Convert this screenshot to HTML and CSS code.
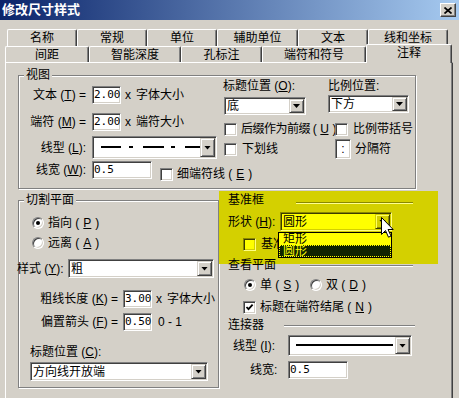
FILE: index.html
```html
<!DOCTYPE html>
<html lang="zh-CN">
  <head>
    <meta charset="UTF-8" />
    <meta name="viewport" content="width=device-width, initial-scale=1.0" />
    <title>修改尺寸样式</title>
    <link rel="stylesheet" href="styles.css">
  </head>
  <body>
    <div class="titlebar">
      <span class="title">修改尺寸样式</span>
      <span class="close-btn">
        <svg width="8" height="7" viewBox="0 0 8 7"><path d="M0.5 0.5 L7.5 6.5 M7.5 0.5 L0.5 6.5" stroke="#000" stroke-width="1.7" /></svg>
      </span>
    </div>

    <!-- Tabs -->
    <div class="tabs">
      <div class="tab-row back">
        <div class="tab w70">名称</div>
        <div class="tab w70">常规</div>
        <div class="tab w70">单位</div>
        <div class="tab w81">辅助单位</div>
        <div class="tab w70">文本</div>
        <div class="tab w80">线和坐标</div>
      </div>
      <div class="tab-row front">
        <div class="tab w84">间距</div>
        <div class="tab w92">智能深度</div>
        <div class="tab w81">孔标注</div>
        <div class="tab w104">端符和符号</div>
        <div class="tab w86 active">注释</div>
      </div>
    </div>

    <div class="panel">
      <!-- 视图 -->
      <div class="group view">
        <div class="group-title">视图</div>
        <div class="view-top">
          <div class="view-left">
            <div class="field-row">
              <span class="lbl">文本 (<u>T</u>) =</span>
              <span class="edit num">2.00</span>
              <span class="times">x</span>
              <span>字体大小</span>
            </div>
            <div class="field-row second">
              <span class="lbl">端符 (<u>M</u>) =</span>
              <span class="edit num">2.00</span>
              <span class="times">x</span>
              <span>端符大小</span>
            </div>
            <div class="field-row third">
              <span class="lbl">线型 (<u>L</u>):</span>
              <div class="combo linetype">
                <div class="combo-text">
                  <svg width="106" height="19" viewBox="0 0 106 19">
                    <rect x="7" y="8" width="20" height="2" />
                    <rect x="35" y="8" width="4" height="2" />
                    <rect x="49" y="8" width="21" height="2" />
                    <rect x="77" y="8" width="4" height="2" />
                    <rect x="91" y="8" width="15" height="2" />
                  </svg>
                </div>
                <div class="combo-btn"><i class="arrow"></i></div>
              </div>
            </div>
          </div>

          <div class="view-right">
            <div class="pos-row">
              <div class="pos-col first">
                <div>标题位置 (<u>O</u>):</div>
                <div class="combo pos-title">
                  <span class="combo-text">底</span>
                  <span class="combo-btn"><i class="arrow"></i></span>
                </div>
              </div>
              <div class="pos-col">
                <div>比例位置:</div>
                <div class="combo pos-scale">
                  <span class="combo-text">下方</span>
                  <span class="combo-btn"><i class="arrow"></i></span>
                </div>
              </div>
            </div>
            <div class="check-row r1">
              <div class="check-item first tight"><span class="checkbox"></span>后缀作为前缀 (<u>U</u>)</div>
              <div class="check-item"><span class="checkbox"></span>比例带括号</div>
            </div>
            <div class="check-row r2">
              <div class="check-item first"><span class="checkbox"></span>下划线</div>
              <div class="check-item sep"><span class="sep-box">:</span>分隔符</div>
            </div>
          </div>
        </div>

        <div class="view-bottom">
          <span class="lbl">线宽 (<u>W</u>):</span>
          <span class="edit num wide">0.5</span>
          <div class="check-item thin"><span class="checkbox"></span>细端符线 (<u>E</u>)</div>
        </div>
      </div>

      <div class="lower">
        <!-- 切割平面 -->
        <div class="group cut">
          <div class="group-title">切割平面</div>
          <div class="radio-row first"><span class="radio on"></span>指向 (<u>P</u>)</div>
          <div class="radio-row"><span class="radio"></span>远离 (<u>A</u>)</div>
          <div class="style-row">
            <span class="style-lbl">样式 (<u>Y</u>):</span>
            <div class="combo style">
              <span class="combo-text">粗</span>
              <span class="combo-btn"><i class="arrow"></i></span>
            </div>
          </div>
          <div class="field-row bar-len">
            <span class="lbl long">粗线长度 (<u>K</u>) =</span>
            <span class="edit num">3.00</span>
            <span class="times">x</span>
            <span>字体大小</span>
          </div>
          <div class="field-row offset">
            <span class="lbl long">偏置箭头 (<u>F</u>) =</span>
            <span class="edit num">0.50</span>
            <span class="range">0 - 1</span>
          </div>
          <div class="cut-title-lbl">标题位置 (<u>C</u>):</div>
          <div class="combo cut-title">
            <span class="combo-text">方向线开放端</span>
            <span class="combo-btn"><i class="arrow"></i></span>
          </div>
        </div>

        <div class="lower-right">
          <!-- 基准框 (highlighted) -->
          <div class="highlight">
            <div class="sec-row">
              <span>基准框</span>
              <span class="etch datum-line"></span>
            </div>
            <div class="shape-row">
              <span class="shape-lbl">形状 (<u>H</u>):</span>
              <div class="combo yellow shape">
                <span class="combo-text">圆形</span>
                <span class="combo-btn"><i class="arrow"></i></span>
              </div>
            </div>
            <div class="datum-check"><span class="checkbox yellow"></span>基准</div>
          </div>

          <div class="sec-row view-plane">
            <span>查看平面</span>
            <span class="etch plane-line"></span>
          </div>
          <div class="plane-radios">
            <div class="radio-item first"><span class="radio on"></span>单 (<u>S</u>)</div>
            <div class="radio-item"><span class="radio"></span>双 (<u>D</u>)</div>
          </div>
          <div class="end-check">
            <span class="checkbox">
              <svg width="9" height="9" viewBox="0 0 9 9"><path d="M1.5 4 L3.5 6.2 L7.6 1.6" fill="none" stroke="#000" stroke-width="1.8" /></svg>
            </span>
            标题在端符结尾 (<u>N</u>)
          </div>
          <div class="sec-row connector">
            <span>连接器</span>
            <span class="etch conn-line"></span>
          </div>
          <div class="conn-type">
            <span class="conn-lbl">线型 (<u>I</u>):</span>
            <div class="combo conn-combo">
              <div class="combo-text">
                <svg width="103" height="17" viewBox="0 0 103 17"><rect x="6" y="7" width="97" height="2" /></svg>
              </div>
              <div class="combo-btn"><i class="arrow"></i></div>
            </div>
          </div>
          <div class="conn-width">
            <span class="conn-w-lbl">线宽:</span>
            <span class="edit num wide">0.5</span>
          </div>

          <!-- Open drop-down list of 形状 -->
          <div class="droplist">
            <div class="drop-item">矩形</div>
            <div class="drop-item selected">圆形</div>
          </div>

          <svg class="cursor" width="13" height="21" viewBox="0 0 13 21">
            <path d="M0.5 0.5 L0.5 17.5 L4.5 13.5 L7.5 20.2 L10 19 L7 12.5 L12.2 12.5 Z" fill="#fff" stroke="#000" stroke-width="1" />
          </svg>
        </div>
      </div>
    </div>
  </body>
</html>
```

FILE: styles.css
```css
* {
  box-sizing: border-box;
}

body {
  margin: 0;
  width: 459px;
  height: 398px;
  overflow: hidden;
  background-color: #d4d0c8;
  font-family: "Liberation Sans", "Noto Sans CJK SC", sans-serif;
  font-size: 12px;
  line-height: 14px;
  color: #000;
}

u {
  text-underline-offset: 1px;
}

/* Title bar */
.titlebar {
  height: 20px;
  display: flex;
  align-items: center;
  justify-content: space-between;
  padding: 0 3px 0 2px;
  background: linear-gradient(to right, #0a246a, #a6caf0);
}

.title {
  color: white;
  font-weight: bold;
  font-size: 13px;
}

.close-btn {
  width: 16px;
  height: 14px;
  display: flex;
  align-items: center;
  justify-content: center;
  background-color: #d4d0c8;
  border: 1px solid;
  border-color: #fff #404040 #404040 #fff;
  box-shadow: inset -1px -1px #808080;
}

/* Tabs */
.tabs {
  margin-top: 9px;
}

.tab-row {
  display: flex;
}

.tab-row.back {
  height: 17px;
  padding-left: 7px;
}

.tab-row.front {
  height: 16px;
  padding-left: 5px;
}

.tab {
  flex: none;
  height: 100%;
  background-color: #d4d0c8;
  border-top: 1px solid #fff;
  border-left: 1px solid #fff;
  border-right: 1px solid #404040;
  border-radius: 2px 2px 0 0;
  box-shadow: inset -1px 0 #808080;
  text-align: center;
  line-height: 14px;
  padding-top: 1px;
}

.tab.active {
  position: relative;
  z-index: 1;
  height: 19px;
  margin-top: -2px;
}

.w70 { width: 70px; }
.w80 { width: 80px; }
.w81 { width: 81px; }
.w84 { width: 84px; }
.w86 { width: 86px; }
.w92 { width: 92px; }
.w104 { width: 104px; }

/* Tab page */
.panel {
  margin-left: 5px;
  width: 448px;
  height: 340px;
  padding-left: 12px;
  border-top: 1px solid #fff;
  border-left: 1px solid #fff;
  border-right: 1px solid #404040;
  box-shadow: inset -1px 0 #808080;
}

.group {
  border: 1px solid #808080;
  box-shadow: inset 1px 1px #fff, 1px 1px #fff;
}

.group-title {
  width: fit-content;
  margin: -8px 0 0 5px;
  padding: 0 2px;
  background-color: #d4d0c8;
}

/* Win classic controls */
.edit {
  flex: none;
  height: 18px;
  width: 29px;
  padding-left: 1px;
  background-color: white;
  border: 1px solid;
  border-color: #808080 #fff #fff #808080;
  box-shadow: inset 1px 1px #404040, inset -1px -1px #d4d0c8;
}

.edit.num {
  font-family: "DejaVu Sans Mono", monospace;
  font-size: 11px;
  line-height: 16px;
}

.edit.wide {
  width: 60px;
}

.combo {
  flex: none;
  display: flex;
  height: 18px;
  padding: 1px;
  background-color: white;
  border: 1px solid;
  border-color: #808080 #fff #fff #808080;
  box-shadow: inset 1px 1px #404040, inset -1px -1px #d4d0c8;
}

.combo-text {
  flex: 1;
  display: flex;
  align-items: center;
  padding-left: 1px;
  white-space: nowrap;
}

.combo-text svg {
  display: block;
}

.combo-btn {
  flex: none;
  width: 15px;
  display: flex;
  align-items: center;
  justify-content: center;
  background-color: #d4d0c8;
  border: 1px solid;
  border-color: #d4d0c8 #404040 #404040 #d4d0c8;
  box-shadow: inset 1px 1px #fff, inset -1px -1px #808080;
}

.arrow {
  width: 7px;
  height: 4px;
  background-color: black;
  clip-path: polygon(0 0, 100% 0, 50% 100%);
}

.checkbox {
  flex: none;
  width: 13px;
  height: 13px;
  display: flex;
  align-items: center;
  justify-content: center;
  background-color: white;
  border: 1px solid;
  border-color: #808080 #fff #fff #808080;
  box-shadow: inset 1px 1px #404040, inset -1px -1px #d4d0c8;
}

.radio {
  flex: none;
  width: 12px;
  height: 12px;
  border-radius: 50%;
  display: flex;
  align-items: center;
  justify-content: center;
  background-color: white;
  border: 1px solid;
  border-color: #808080 #fff #fff #808080;
  box-shadow: inset 1px 1px #404040, inset -1px -1px #d4d0c8;
}

.radio.on::after {
  content: "";
  width: 4px;
  height: 4px;
  border-radius: 50%;
  background-color: black;
}

.etch {
  height: 2px;
  border-top: 1px solid #808080;
  border-bottom: 1px solid #fff;
}

/* 视图 */
.view {
  margin-top: 12px;
  width: 398px;
  height: 114px;
}

.view-top {
  display: flex;
  margin-top: -3px;
}

.view-left {
  width: 204px;
  flex: none;
  padding-top: 7px;
}

.field-row {
  display: flex;
  align-items: center;
  height: 18px;
  white-space: nowrap;
}

.field-row.second {
  margin-top: 9px;
}

.field-row.third {
  margin-top: 5px;
  height: 23px;
}

.lbl {
  flex: none;
  width: 67px;
  margin-right: 6px;
  text-align: right;
}

.times {
  margin: 0 5px 0 4px;
}

.combo.linetype {
  width: 125px;
  height: 23px;
}

.combo.linetype .combo-text {
  padding-left: 0;
}

.view-right {
  flex: 1;
  white-space: nowrap;
}

.pos-row {
  display: flex;
}

.pos-col.first {
  width: 105px;
}

.combo.pos-title {
  width: 82px;
  margin: 4px 0 0 1px;
}

.combo.pos-scale {
  width: 81px;
  margin-top: 2px;
}

.check-row {
  display: flex;
  align-items: center;
}

.check-row.r1 {
  margin-top: 7px;
  height: 14px;
}

.check-row.r2 {
  margin-top: 3px;
  height: 20px;
}

.check-item {
  display: flex;
  align-items: center;
  gap: 5px;
  white-space: nowrap;
}

.check-item.first {
  width: 111px;
  margin-left: 1px;
}

.check-item.tight {
  gap: 4px;
  letter-spacing: -0.5px;
  min-width: 0;
  overflow: visible;
}

.check-item.sep {
  gap: 4px;
}

.sep-box {
  width: 16px;
  height: 20px;
  display: flex;
  align-items: center;
  justify-content: center;
  background-color: white;
  border: 1px solid;
  border-color: #808080 #fff #fff #808080;
  box-shadow: inset 1px 1px #404040, inset -1px -1px #d4d0c8;
}

.view-bottom {
  display: flex;
  align-items: flex-start;
  height: 18px;
  margin-top: 2px;
  white-space: nowrap;
}

.view-bottom .lbl {
  line-height: 18px;
}

.check-item.thin {
  gap: 4px;
  height: 14px;
  margin: 6px 0 0 8px;
}

/* Lower half */
.lower {
  display: flex;
  align-items: flex-start;
}

.group.cut {
  flex: none;
  width: 201px;
  height: 188px;
  margin-top: 11px;
}

.radio-row {
  display: flex;
  align-items: center;
  gap: 4px;
  height: 14px;
  margin: 6px 0 0 13px;
}

.radio-row.first {
  margin-top: 9px;
}

.style-row {
  display: flex;
  align-items: center;
  margin-top: 9px;
  white-space: nowrap;
}

.style-lbl {
  width: 51px;
  margin-left: -2px;
}

.combo.style {
  width: 146px;
  height: 19px;
}

.field-row.bar-len {
  margin-top: 12px;
}

.field-row.offset {
  margin-top: 5px;
}

.lbl.long {
  width: 99px;
  margin-right: 5px;
}

.range {
  margin-left: 6px;
}

.cut-title-lbl {
  margin: 14px 0 0 11px;
}

.combo.cut-title {
  width: 178px;
  height: 19px;
  margin: 3px 0 0 11px;
}

.lower-right {
  position: relative;
  flex: none;
  width: 219px;
}

.highlight {
  height: 73px;
  margin-top: 2px;
  padding-top: 2px;
  background-color: #d4d000;
}

.sec-row {
  display: flex;
  align-items: flex-start;
  height: 14px;
  padding-left: 9px;
}

.datum-line {
  width: 117px;
  margin: 9px 25px 0 auto;
  border-top-color: #8a8800;
  border-bottom-color: #ffff90;
}

.shape-row {
  display: flex;
  align-items: center;
  margin-top: 5px;
  padding-left: 9px;
}

.shape-lbl {
  width: 52px;
  white-space: nowrap;
}

.combo.shape {
  width: 112px;
  height: 19px;
}

.combo.yellow {
  background-color: #ffff00;
  border-color: #8a8800 #ffff80 #ffff80 #8a8800;
  box-shadow: inset 1px 1px #3c3c00, inset -1px -1px #d4d000;
}

.combo.yellow .combo-btn {
  background-color: #d4d000;
  border-color: #d4d000 #3c3c00 #3c3c00 #d4d000;
  box-shadow: inset 1px 1px #ffff60, inset -1px -1px #8a8800;
}

.datum-check {
  display: flex;
  align-items: center;
  gap: 5px;
  height: 14px;
  margin-top: 6px;
  padding-left: 24px;
}

.checkbox.yellow {
  background-color: #ffff00;
  border-color: #8a8800 #ffff80 #ffff80 #8a8800;
  box-shadow: inset 1px 1px #3c3c00, inset -1px -1px #d4d000;
}

.sec-row.view-plane {
  margin-top: -6px;
}

.plane-line {
  width: 113px;
  margin: 7px 25px 0 auto;
}

.plane-radios {
  display: flex;
  align-items: center;
  height: 14px;
  margin-top: 6px;
  padding-left: 25px;
}

.radio-item {
  display: flex;
  align-items: center;
  gap: 4px;
  white-space: nowrap;
}

.radio-item.first {
  width: 66px;
}

.end-check {
  display: flex;
  align-items: center;
  gap: 4px;
  height: 14px;
  margin-top: 8px;
  padding-left: 24px;
  white-space: nowrap;
}

.sec-row.connector {
  margin-top: 4px;
}

.conn-line {
  width: 131px;
  margin: 7px 23px 0 auto;
}

.conn-type {
  display: flex;
  align-items: center;
  margin-top: 3px;
  padding-left: 14px;
}

.conn-lbl {
  width: 55px;
  white-space: nowrap;
}

.combo.conn-combo {
  width: 124px;
  height: 21px;
}

.combo.conn-combo .combo-text {
  padding-left: 0;
}

.conn-width {
  display: flex;
  align-items: center;
  margin-top: 5px;
  padding-left: 31px;
}

.conn-w-lbl {
  width: 38px;
}

/* Open list of the 形状 combo */
.droplist {
  position: absolute;
  left: 59px;
  top: 43px;
  width: 114px;
  height: 26px;
  border: 1px solid black;
  background-color: #ffff00;
}

.drop-item {
  height: 12px;
  line-height: 12px;
  padding-left: 4px;
}

.drop-item.selected {
  background-color: #102400;
  color: #ffff00;
  outline: 1px dotted #ffff00;
  outline-offset: -1px;
}

.cursor {
  position: absolute;
  left: 162px;
  top: 28px;
  z-index: 2;
}
```
